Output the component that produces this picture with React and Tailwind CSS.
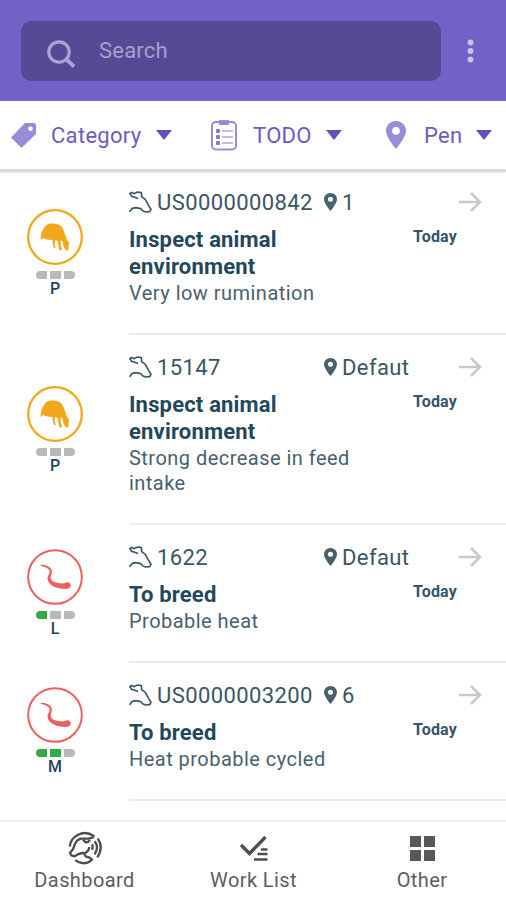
import React from "react";

const tasks = [
  {
    id: "US0000000842",
    pen: "1",
    title: "Inspect animal environment",
    text: "Very low rumination",
    type: "health",
    level: 0,
    letter: "P",
  },
  {
    id: "15147",
    pen: "Defaut",
    title: "Inspect animal environment",
    text: "Strong decrease in feed intake",
    type: "health",
    level: 0,
    letter: "P",
  },
  {
    id: "1622",
    pen: "Defaut",
    title: "To breed",
    text: "Probable heat",
    type: "breed",
    level: 1,
    letter: "L",
  },
  {
    id: "US0000003200",
    pen: "6",
    title: "To breed",
    text: "Heat probable cycled",
    type: "breed",
    level: 2,
    letter: "M",
  },
];

const Caret = () => (
  <svg className="h-[10px] w-4 shrink-0" viewBox="0 0 16 10">
    <path d="M0 0h16L8 10z" fill="#634fbf" />
  </svg>
);

const Pin = ({ className }) => (
  <svg className={className} viewBox="0 0 20 28" preserveAspectRatio="none">
    <path
      d="M10 0C4.400 0 0 4.300 0 9.800 0 16.500 10 28 10 28s10-11.500 10-18.200C20 4.300 15.600 0 10 0zm0 13.700a3.900 3.900 0 1 1 0-7.800 3.900 3.900 0 0 1 0 7.800z"
      fill="currentColor"
    />
  </svg>
);

const CowHead = () => (
  <svg
    className="h-[22px] w-[23px] shrink-0"
    viewBox="0 0 69 66"
    fill="none"
    stroke="#3b5663"
    strokeWidth="5"
    strokeLinejoin="round"
    strokeLinecap="round"
  >
    <path d="M3 8 8 4 14 8 26 3 37 5 38 17 49 25 57 40 66 55 62 62 50 63 42 60 35 53 20 50 10 52 3 61" />
    <path d="M3 8 8 16 15 18 25 22" />
  </svg>
);

const HealthIcon = () => (
  <svg className="h-14 w-14" viewBox="0 0 168 168">
    <circle cx="84" cy="84" r="80.500" fill="none" stroke="#f3a81c" strokeWidth="7" />
    <path
      d="M41 86C42 69 50 55 60 47 69 41 84 43 96 47 106 51 110 62 113 73L119 90 126 101 124 122 117 125 109 112 107 98 101 94 101 107 105 120 101 126 96 120 92 96 84 94 83 104 86 116 81 118 77 104 76 93C64 93 55 90 48 87L41 93z"
      fill="#f3a81c"
    />
  </svg>
);

const BreedIcon = () => (
  <svg className="h-14 w-14" viewBox="0 0 168 168">
    <circle cx="84" cy="84" r="80.500" fill="none" stroke="#ec615f" strokeWidth="6" />
    <path
      d="M41 48C54 46 65 52 72 59 79 68 71 77 71 86 72 97 88 103 103 103 113 104 117 99 124 100 133 103 133 114 126 118 115 122 99 119 86 115 69 109 60 97 62 85 64 77 71 70 67 63 60 56 52 53 41 51z"
      fill="#ec615f"
    />
  </svg>
);

const Level = ({ level }) => (
  <div className="mt-[6px] flex gap-[3px]">
    <span
      className={`h-2 w-[11px] rounded-l-full ${level > 0 ? "bg-[#35a945]" : "bg-[#b9b9b9]"}`}
    />
    <span className={`h-2 w-[11px] ${level > 1 ? "bg-[#35a945]" : "bg-[#b9b9b9]"}`} />
    <span
      className={`h-2 w-[11px] rounded-r-full ${level > 2 ? "bg-[#35a945]" : "bg-[#b9b9b9]"}`}
    />
  </div>
);

const TaskRow = ({ task }) => {
  return (
    <div className="flex">
      <div
        className={`flex w-[129px] shrink-0 flex-col justify-center pr-[19px] ${task.type === "breed" ? "pb-[2px]" : ""}`}
      >
        <div className="flex flex-col items-center">
          {task.type === "health" ? <HealthIcon /> : <BreedIcon />}
          <Level level={task.level} />
          <span className="pt-px text-[16px] leading-[17px] font-medium text-[#24465b]">
            {task.letter}
          </span>
        </div>
      </div>
      <div className="flex-1 border-b-2 border-[#ececed] pt-[19px] pb-[27px]">
        <div className="flex h-[26px] items-center text-[22px] tracking-[0.4px] text-[#3b5663]">
          <div className="flex w-[195px] items-center gap-[5px]">
            <CowHead />
            <span>{task.id}</span>
          </div>
          <div className="flex flex-1 items-center gap-[5px]">
            <Pin className="h-[18px] w-[13px] text-[#49616b]" />
            <span>{task.pen}</span>
          </div>
          <svg
            className="mr-6 h-5 w-[23px]"
            viewBox="0 0 23 20"
            fill="none"
            stroke="#c5caca"
            strokeWidth="2.600"
          >
            <path d="M0 10h21M12 1l9 9-9 9" />
          </svg>
        </div>
        <div className="mt-[11px] flex justify-between">
          <div className="w-[240px]">
            <h2 className="w-[190px] text-[22px] leading-[27px] font-bold tracking-[0.18px] text-[#24485b]">
              {task.title}
            </h2>
            <p className="pt-px text-[20px] leading-[25px] tracking-[0.47px] text-[#49616d]">
              {task.text}
            </p>
          </div>
          <span className="mt-px mr-[49px] text-[16px] leading-5 font-bold tracking-[0.2px] text-[#34566a]">
            Today
          </span>
        </div>
      </div>
    </div>
  );
};

const App = () => {
  return (
    <div className="flex h-[900px] w-[506px] flex-col overflow-hidden bg-white font-['Roboto',sans-serif]">
      <header className="flex h-[101px] shrink-0 items-start bg-[#7062c6] pt-[21px] pl-[21px]">
        <div className="flex h-[60px] w-[420px] items-center rounded-[10px] bg-[#564a96] pl-[26px]">
          <svg
            className="mt-[5px] h-7 w-7"
            viewBox="0 0 28 28"
            fill="none"
            stroke="#aba3d2"
            strokeWidth="3.200"
          >
            <circle cx="12" cy="12" r="10.200" />
            <path d="M19 19 27 26.500" strokeWidth="3.800" />
          </svg>
          <span className="-mt-[2px] ml-6 text-[22px] tracking-[0.2px] text-[#a69dce]">Search</span>
        </div>
        <svg className="mt-[18px] ml-[26px] h-6 w-[7px]" viewBox="0 0 7 24" fill="#c9c3ec">
          <circle cx="3.500" cy="3.500" r="2.900" />
          <circle cx="3.500" cy="12" r="2.900" />
          <circle cx="3.500" cy="20.500" r="2.900" />
        </svg>
      </header>

      <div className="flex h-[71px] shrink-0 items-center border-b-3 border-[#d8dad9] text-[22px] tracking-[0.3px] text-[#6d5bc2] shadow-[0_1px_2px_#e4e6e5]">
        <div className="flex w-[211px] items-center pl-[11px]">
          <svg className="h-[25px] w-[25px]" viewBox="0 0 25 25">
            <path
              d="M14 0H23a2 2 0 0 1 2 2V11L10.500 25 0 14.500zM19.500 3.500a2.300 2.300 0 1 0 0 4.600 2.300 2.300 0 0 0 0-4.600z"
              fill="#9b8cd8"
            />
          </svg>
          <span className="mr-[14px] ml-[15px]">Category</span>
          <Caret />
        </div>
        <div className="flex w-[175px] items-center">
          <svg className="h-8 w-[26px]" viewBox="0 0 26 32">
            <rect x="1" y="3" width="24" height="27.500" rx="4" fill="none" stroke="#9b8cd8" strokeWidth="2" />
            <path d="M8 1h10v5H8z" fill="#9b8cd8" />
            <g fill="#8878cb">
              <rect x="5" y="10" width="4" height="4" rx="1" />
              <rect x="5" y="16" width="4" height="4" rx="1" />
              <rect x="5" y="22" width="4" height="4" rx="1" />
            </g>
            <path d="M11 12h11M11 18h11M11 24h11" stroke="#b2a8df" strokeWidth="1.500" />
          </svg>
          <span className="mr-[14px] ml-[16px]">TODO</span>
          <Caret />
        </div>
        <div className="flex items-center">
          <Pin className="h-7 w-5 text-[#9b8cd8]" />
          <span className="mr-[14px] ml-[18px]">Pen</span>
          <Caret />
        </div>
      </div>

      <main className="-mt-[2px] flex-1">
        {tasks.map((task) => (
          <TaskRow key={task.id} task={task} />
        ))}
      </main>

      <nav className="flex h-[80px] shrink-0 border-t-2 border-[#eeeeee] text-[20px] leading-6 tracking-[0.4px] text-[#5e5e5e]">
        <div className="flex w-[169px] flex-col items-center pt-[9px]">
          <svg
            className="h-[34px] w-[34px]"
            viewBox="0 0 102 102"
            fill="none"
            stroke="#4c4f50"
            strokeWidth="7"
            strokeLinejoin="round"
          >
            <path d="M5 47C8 17 45-7 77 15L74 20 60 23 38 23 28 28 21 38 15 55 6 65 10 73 20 76 32 69 44 66 54 65 61 58 64 48" />
            <path d="M45 26 53 34 60 33 66 26" />
            <path d="M22 87C35 99 57 101 72 86L65 80 54 77 48 69" />
            <path d="M72 40Q76 48 72 56M80 31Q94 49 80 70M89 22Q108 49 88 79" />
          </svg>
          <span className="mt-[3px]">Dashboard</span>
        </div>
        <div className="flex w-[169px] flex-col items-center pt-[9px]">
          <svg
            className="h-[34px] w-[30px]"
            viewBox="0 0 30 34"
            fill="none"
            stroke="#4c4f50"
          >
            <path d="M2 14 10.500 22.500 26.500 6" strokeWidth="3.400" />
            <path d="M22 18.500h6.500M18.500 23h10M15 28.500h13.500" strokeWidth="2.400" />
          </svg>
          <span className="mt-[3px]">Work List</span>
        </div>
        <div className="flex w-[168px] flex-col items-center pt-[9px]">
          <svg className="h-[34px] w-[26px]" viewBox="0 0 26 34" fill="#56595a">
            <path d="M1 5h11v11H1zM15 5h11v11H15zM1 19h11v11H1zM15 19h11v11H15z" />
          </svg>
          <span className="mt-[3px]">Other</span>
        </div>
      </nav>
    </div>
  );
};

export default App;
